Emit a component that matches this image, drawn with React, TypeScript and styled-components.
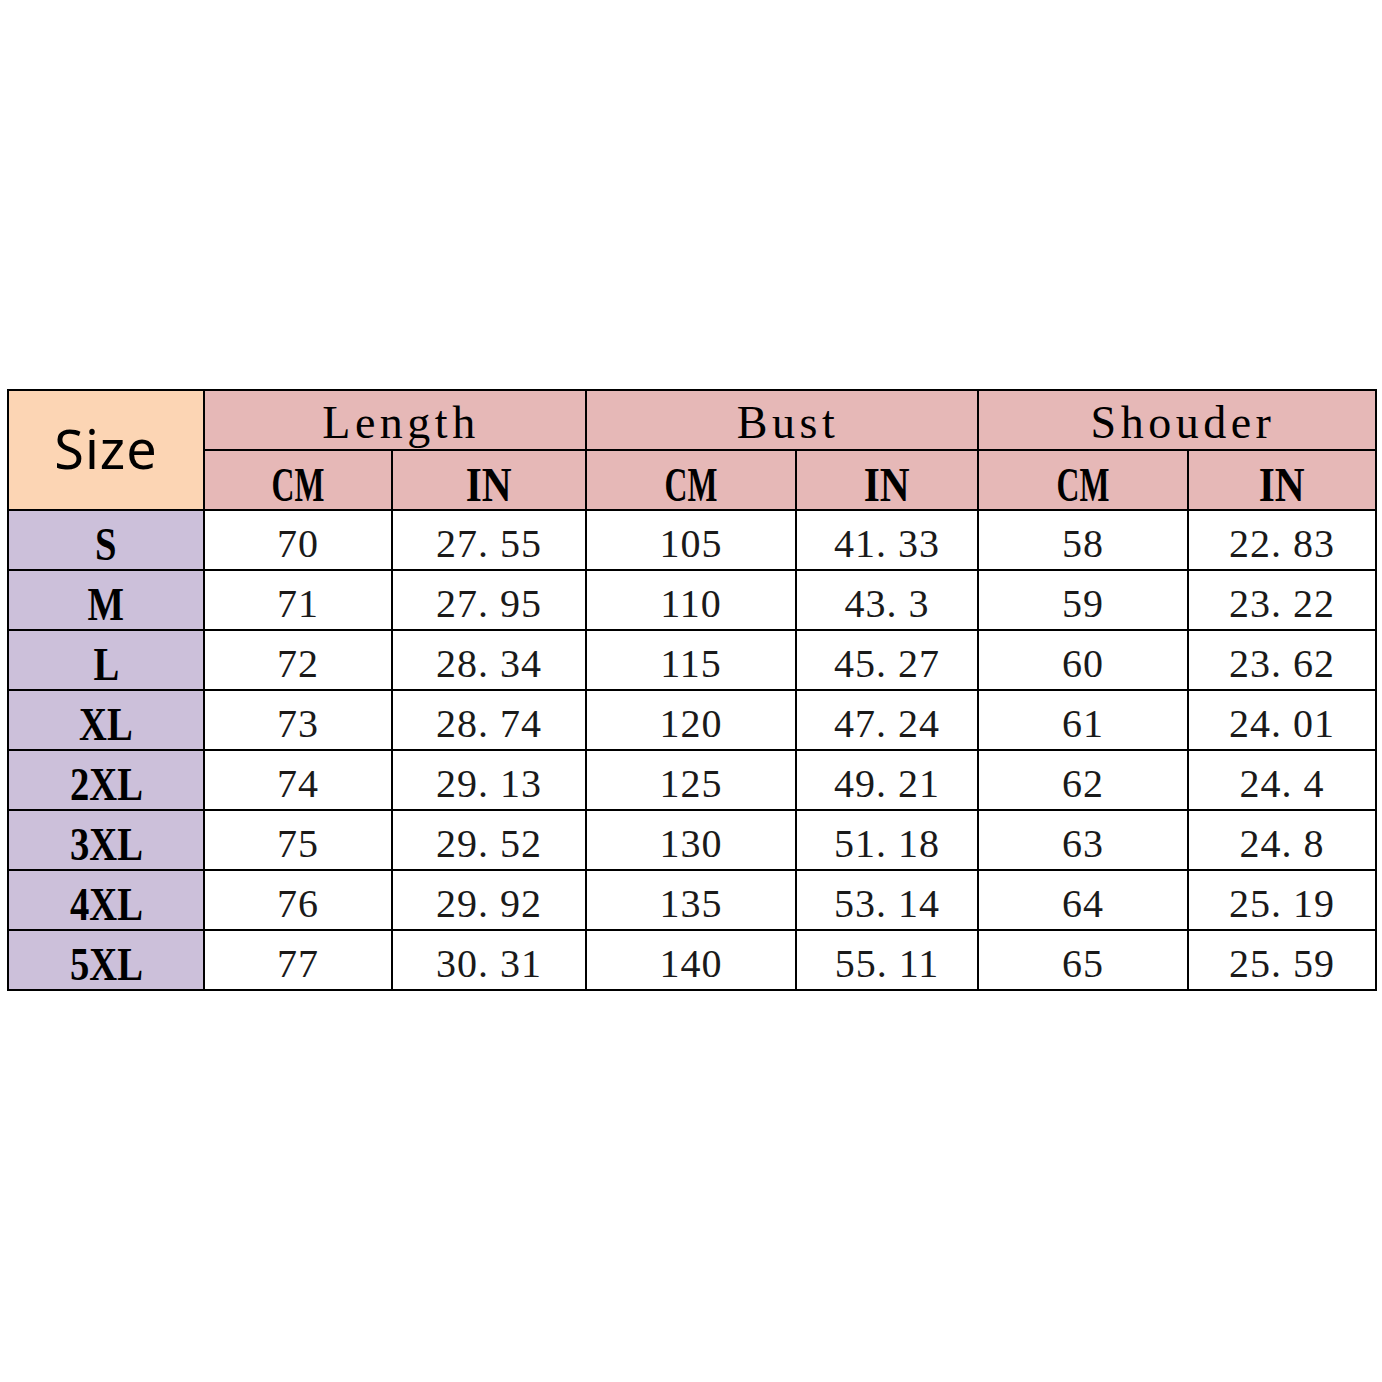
import styled, { createGlobalStyle } from "styled-components"
import { Fragment } from "react"

const GlobalStyle = createGlobalStyle`
  html, body {
    margin: 0;
    padding: 0;
    background: #ffffff;
  }
`;

const rows = [
  { size: "S", len: ["70", "27. 55"], bust: ["105", "41. 33"], sh: ["58", "22. 83"] },
  { size: "M", len: ["71", "27. 95"], bust: ["110", "43. 3"], sh: ["59", "23. 22"] },
  { size: "L", len: ["72", "28. 34"], bust: ["115", "45. 27"], sh: ["60", "23. 62"] },
  { size: "XL", len: ["73", "28. 74"], bust: ["120", "47. 24"], sh: ["61", "24. 01"] },
  { size: "2XL", len: ["74", "29. 13"], bust: ["125", "49. 21"], sh: ["62", "24. 4"] },
  { size: "3XL", len: ["75", "29. 52"], bust: ["130", "51. 18"], sh: ["63", "24. 8"] },
  { size: "4XL", len: ["76", "29. 92"], bust: ["135", "53. 14"], sh: ["64", "25. 19"] },
  { size: "5XL", len: ["77", "30. 31"], bust: ["140", "55. 11"], sh: ["65", "25. 59"] },
];

const groups = ["Length", "Bust", "Shouder"];

const App = () => {
  return (
    <Page>
      <GlobalStyle />
      <Table>
        <SizeHead>Size</SizeHead>
        {groups.map((g) => (
          <GroupHead key={g}>{g}</GroupHead>
        ))}

        {groups.map((g) => (
          <Fragment key={g}>
            <UnitHead><Narrow $scale={0.66}>CM</Narrow></UnitHead>
            <UnitHead><Narrow $scale={0.86}>IN</Narrow></UnitHead>
          </Fragment>
        ))}

        {rows.map((r) => (
          <Fragment key={r.size}>
            <SizeCell><Narrow $scale={0.84}>{r.size}</Narrow></SizeCell>
            {[...r.len, ...r.bust, ...r.sh].map((v, i) => (
              <Cell key={i}>{v}</Cell>
            ))}
          </Fragment>
        ))}
      </Table>
    </Page>
  )
}

export default App;

const Page = styled.div`
width: 1382px;
height: 1382px;
box-sizing: border-box;
padding-top: 389px;
padding-left: 7px;
background: #ffffff;
`;

const Table = styled.div`
display: grid;
grid-template-columns: 194px 186px 192px 208px 180px 208px 186px;
grid-template-rows: repeat(10, 58px);
gap: 2px;
padding: 2px;
width: max-content;
background: #000000;
`;

const Base = styled.div`
display: flex;
align-items: center;
justify-content: center;
color: #111111;
white-space: pre;
`;

const SizeHead = styled(Base)`
grid-row: span 2;
background: #fcd5b4;
font-family: "Noto Sans", "DejaVu Sans", sans-serif;
font-size: 54px;
letter-spacing: 1px;
padding-bottom: 4px;
color: #000;
`;

const GroupHead = styled(Base)`
grid-column: span 2;
background: #e6b8b7;
font-family: "Liberation Serif", serif;
font-size: 46px;
letter-spacing: 4.5px;
color: #000;
padding-top: 4px;
padding-left: 12px;
`;

const UnitHead = styled(Base)`
background: #e6b8b7;
padding-top: 8px;
font-family: "Liberation Serif", serif;
font-weight: 700;
font-size: 48px;
color: #000;
`;

const Narrow = styled.span<{ $scale: number }>`
display: inline-block;
transform: scaleX(${(p) => p.$scale});
`;

const SizeCell = styled(Base)`
background: #ccc0da;
font-family: "Liberation Serif", serif;
font-weight: 700;
font-size: 46px;
color: #000;
padding-top: 8px;
`;

const Cell = styled(Base)`
background: #ffffff;
font-family: "Liberation Serif", serif;
font-size: 40px;
letter-spacing: 1px;
color: #1a1a1a;
padding-top: 6px;
`;
